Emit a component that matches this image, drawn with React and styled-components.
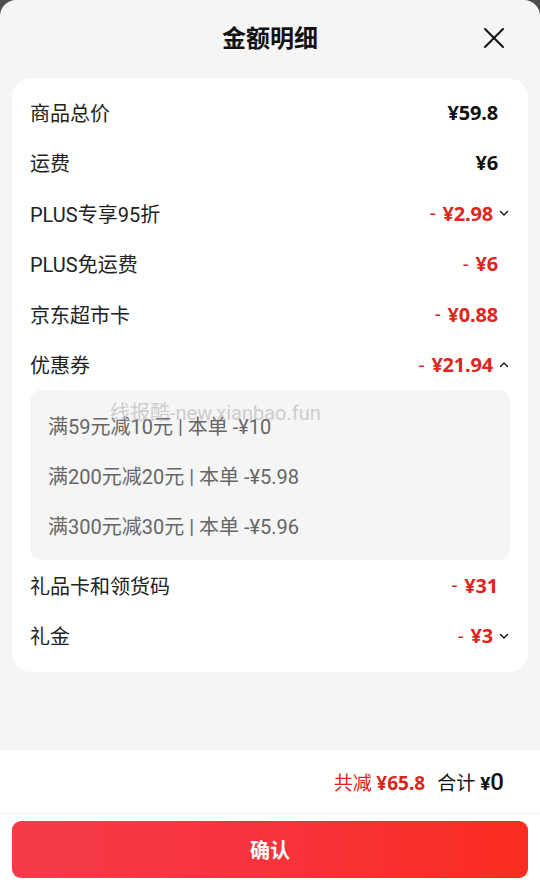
import React from 'react';
import styled, { createGlobalStyle } from 'styled-components';

const GlobalStyle = createGlobalStyle`
  html, body {
    margin: 0;
    padding: 0;
    background: #4d4d4d;
  }
  * {
    box-sizing: border-box;
  }
`;

const rows = [
  { label: '商品总价', value: '¥59.8' },
  { label: '运费', value: '¥6' },
  { label: 'PLUS专享95折', value: '¥2.98', minus: true, chevron: 'down' },
  { label: 'PLUS免运费', value: '¥6', minus: true },
  { label: '京东超市卡', value: '¥0.88', minus: true },
  { label: '优惠券', value: '¥21.94', minus: true, chevron: 'up' },
];

const coupons = [
  '满59元减10元 | 本单 -¥10',
  '满200元减20元 | 本单 -¥5.98',
  '满300元减30元 | 本单 -¥5.96',
];

const tailRows = [
  { label: '礼品卡和领货码', value: '¥31', minus: true },
  { label: '礼金', value: '¥3', minus: true, chevron: 'down' },
];

const Chevron = ({ dir }) => (
  <ChevronSvg viewBox="0 0 12 12" $dir={dir}>
    <path d="M2.5 4.5 L6 8 L9.5 4.5" fill="none" stroke="#111" strokeWidth="1.4" strokeLinecap="round" strokeLinejoin="round" />
  </ChevronSvg>
);

const DetailRow = ({ row }) => (
  <Row>
    <Label>{row.label}</Label>
    <ValueWrap $hasChevron={!!row.chevron}>
      {row.minus && <Minus>-</Minus>}
      <Value $red={row.minus}>{row.value}</Value>
      {row.chevron && <Chevron dir={row.chevron} />}
    </ValueWrap>
  </Row>
);

const App = () => {
  return (
    <>
      <GlobalStyle />
      <Sheet>
        <Header>
          <Title>金额明细</Title>
          <CloseButton aria-label="关闭">
            <svg width="22" height="22" viewBox="0 0 22 22">
              <path d="M2 2 L20 20 M20 2 L2 20" stroke="#111" strokeWidth="2" strokeLinecap="round" />
            </svg>
          </CloseButton>
        </Header>

        <Body>
          <Card>
            {rows.map((r) => (
              <DetailRow key={r.label} row={r} />
            ))}
            <CouponBox>
              {coupons.map((c) => (
                <CouponItem key={c}>{c}</CouponItem>
              ))}
              <Watermark>线报酷-new.xianbao.fun</Watermark>
            </CouponBox>
            {tailRows.map((r) => (
              <DetailRow key={r.label} row={r} />
            ))}
          </Card>
        </Body>

        <Footer>
          <Summary>
            <SaveText>
              共减 <strong>¥65.8</strong>
            </SaveText>
            <TotalText>
              合计 <Yen>¥</Yen><Big>0</Big>
            </TotalText>
          </Summary>
          <ButtonBar>
            <ConfirmButton>确认</ConfirmButton>
          </ButtonBar>
        </Footer>
      </Sheet>
    </>
  );
};

const Sheet = styled.div`
  width: 540px;
  height: 891px;
  background: #f5f5f5;
  border-radius: 16px 16px 0 0;
  display: flex;
  flex-direction: column;
  font-family: Roboto, "Noto Sans CJK SC", sans-serif;
  color: #1a1a1a;
  overflow: hidden;
`;

const Header = styled.div`
  height: 78px;
  display: flex;
  align-items: center;
  justify-content: center;
  position: relative;
`;

const Title = styled.h1`
  margin: 0;
  font-size: 24px;
  font-weight: 700;
  font-family: "Noto Sans CJK SC", sans-serif;
  color: #111;
  margin-top: -5px;
`;

const CloseButton = styled.button`
  position: absolute;
  right: 35px;
  top: 27px;
  width: 22px;
  height: 22px;
  padding: 0;
  border: none;
  background: none;
  display: flex;
`;

const Body = styled.div`
  flex: 1;
  padding: 0 12px;
`;

const Card = styled.div`
  background: #fff;
  border-radius: 20px;
  padding: 9px 18px 11px;
`;

const Row = styled.div`
  height: 50.5px;
  display: flex;
  align-items: center;
  justify-content: space-between;
`;

const Label = styled.span`
  font-size: 20px;
  font-weight: 400;
  font-family: Roboto, "Noto Sans CJK SC", sans-serif;
  color: #222;
`;

const ValueWrap = styled.div`
  display: flex;
  align-items: center;
  margin-right: ${(p) => (p.$hasChevron ? '0' : '12px')};
`;

const Minus = styled.span`
  font-size: 20px;
  color: #e0261c;
  margin-right: 7px;
  font-family: Roboto, sans-serif;
`;

const Value = styled.span`
  font-size: 20px;
  font-weight: 700;
  font-family: "Noto Sans", sans-serif;
  color: ${(p) => (p.$red ? '#e0261c' : '#111')};
  letter-spacing: -0.2px;
`;

const ChevronSvg = styled.svg`
  width: 12px;
  height: 12px;
  margin-left: 5px;
  transform: ${(p) => (p.$dir === 'up' ? 'rotate(180deg)' : 'none')};
`;

const CouponBox = styled.div`
  position: relative;
  background: #f5f5f5;
  border-radius: 12px;
  padding: 10px 18px;
`;

const CouponItem = styled.div`
  height: 50px;
  display: flex;
  align-items: center;
  font-size: 20px;
  color: #666;
  font-family: Roboto, "Noto Sans CJK SC", sans-serif;
`;

const Watermark = styled.div`
  position: absolute;
  left: 80px;
  top: 7px;
  font-size: 20px;
  color: rgba(170, 170, 170, 0.55);
  font-family: Roboto, "Noto Sans CJK SC", sans-serif;
  pointer-events: none;
`;

const Footer = styled.div`
  background: #fff;
  height: 141px;
  display: flex;
  flex-direction: column;
`;

const Summary = styled.div`
  height: 64px;
  display: flex;
  align-items: center;
  justify-content: flex-end;
  gap: 12px;
  padding-right: 36px;
  border-bottom: 1px solid #f0f0f0;
  font-family: Roboto, "Noto Sans CJK SC", sans-serif;
`;

const SaveText = styled.span`
  font-size: 19px;
  color: #d6261c;

  strong {
    font-family: "Noto Sans", sans-serif;
    font-weight: 700;
    font-size: 19px;
  }
`;

const TotalText = styled.span`
  font-size: 19px;
  color: #111;
  display: flex;
  align-items: baseline;
`;

const Yen = styled.span`
  margin-left: 5px;
  font-weight: 700;
  font-size: 19px;
`;

const Big = styled.span`
  font-size: 24px;
  font-weight: 500;
`;

const ButtonBar = styled.div`
  padding: 7px 12px 0;
`;

const ConfirmButton = styled.button`
  width: 100%;
  height: 57px;
  border: none;
  border-radius: 9px;
  background: linear-gradient(90deg, #f53b4a 0%, #f7333c 50%, #fa2c1f 100%);
  color: #fff;
  font-size: 20px;
  font-weight: 700;
  font-family: "Noto Sans CJK SC", sans-serif;
`;

export default App;
